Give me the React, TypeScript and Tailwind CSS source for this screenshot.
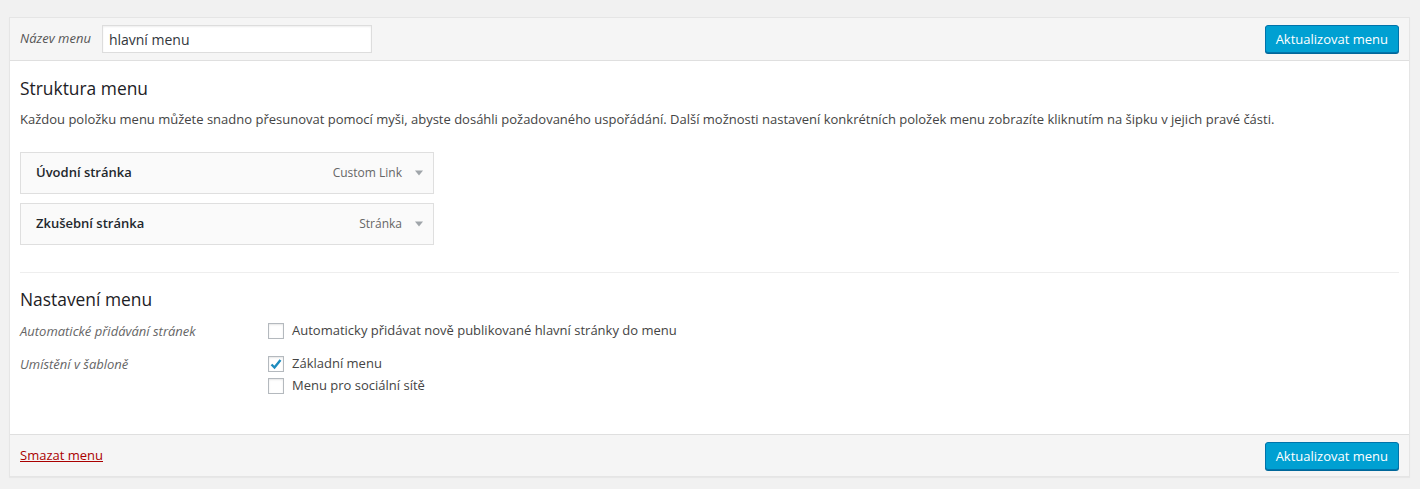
const font = { fontFamily: '"Open Sans", "Noto Sans", sans-serif' };

const SaveButton = () => (
  <button className="h-[28px] rounded-[3px] border border-[#0073aa] bg-[#00a0d2] px-[10px] text-[13px] leading-[26px] text-white shadow-[0_1px_0_#006799]">
    Aktualizovat menu
  </button>
);

const MenuItem = ({ title, type }: { title: string; type: string }) => (
  <div className="mt-[9px] flex h-[42px] w-[414px] items-center border border-[#dfdfdf] bg-[#fafafa] pl-[15px] pr-[10px] first:mt-0">
    <span className="text-[13px] font-semibold text-[#23282d]">{title}</span>
    <span className="ml-auto text-[12px] text-[#666]">{type}</span>
    <svg className="ml-[13px]" width="8" height="6" viewBox="0 0 8 6">
      <path d="M0 0.5h8L4 5.5z" fill="#a0a5aa" />
    </svg>
  </div>
);

const Checkbox = ({ checked, label }: { checked?: boolean; label: string }) => (
  <label className="flex h-[20px] items-center">
    <span className="flex h-[16px] w-[16px] items-center justify-center border border-[#b4b9be] bg-white shadow-[inset_0_1px_2px_rgba(0,0,0,0.1)]">
      {checked && (
        <svg width="12" height="12" viewBox="0 0 12 12">
          <path d="M1.5 6.5l3 3 6-7.5" fill="none" stroke="#1e8cbe" strokeWidth="2.4" strokeLinejoin="miter" />
        </svg>
      )}
    </span>
    <span className="ml-[8px] text-[13px] text-[#444]">{label}</span>
  </label>
);

export default function App() {
  return (
    <div className="h-[489px] bg-[#f1f1f1] pl-[9px] pr-[10px] pt-[17px]" style={font}>
      <div className="border border-[#e5e5e5] bg-white shadow-[0_1px_1px_rgba(0,0,0,0.04)]">
        <div className="flex items-center border-b border-[#dfdfdf] bg-[#f5f5f5] py-[7px] pl-[10px] pr-[10px]">
          <span className="text-[13px] italic text-[#555]">Název menu</span>
          <div className="ml-[11px] flex h-[28px] w-[270px] items-center border border-[#ddd] bg-white pl-[6px] text-[14px] text-[#32373c] shadow-[inset_0_1px_2px_rgba(0,0,0,0.07)]">
            hlavní menu
          </div>
          <div className="ml-auto">
            <SaveButton />
          </div>
        </div>

        <div className="px-[10px] pb-[38px]">
          <h3 className="mt-[15px] text-[17.4px] leading-[24px] text-[#1d2125]">Struktura menu</h3>
          <p className="mt-[9px] text-[13px] leading-[20px] text-[#444]">
            Každou položku menu můžete snadno přesunovat pomocí myši, abyste dosáhli požadovaného uspořádání. Další možnosti nastavení konkrétních položek menu zobrazíte kliknutím na šipku v jejich pravé části.
          </p>
          <div className="mt-[23px] flex flex-col">
            <MenuItem title="Úvodní stránka" type="Custom Link" />
            <MenuItem title="Zkušební stránka" type="Stránka" />
          </div>

          <div className="mt-[27px] h-px bg-[#eee]" />

          <h3 className="mt-[14px] text-[17.4px] leading-[24px] text-[#1d2125]">Nastavení menu</h3>
          <div className="mt-[10px] flex">
            <span className="w-[248px] text-[13px] italic leading-[20px] text-[#666]">Automatické přidávání stránek</span>
            <Checkbox label="Automaticky přidávat nově publikované hlavní stránky do menu" />
          </div>
          <div className="mt-[13px] flex">
            <span className="w-[248px] text-[13px] italic leading-[20px] text-[#666]">Umístění v šabloně</span>
            <div className="flex flex-col gap-[2px]">
              <Checkbox checked label="Základní menu" />
              <Checkbox label="Menu pro sociální sítě" />
            </div>
          </div>
        </div>

        <div className="flex items-center border-t border-[#dfdfdf] bg-[#f5f5f5] px-[10px] pb-[6px] pt-[7px]">
          <a href="#" className="text-[13px] text-[#a00] underline">Smazat menu</a>
          <div className="ml-auto">
            <SaveButton />
          </div>
        </div>
      </div>
    </div>
  );
}
